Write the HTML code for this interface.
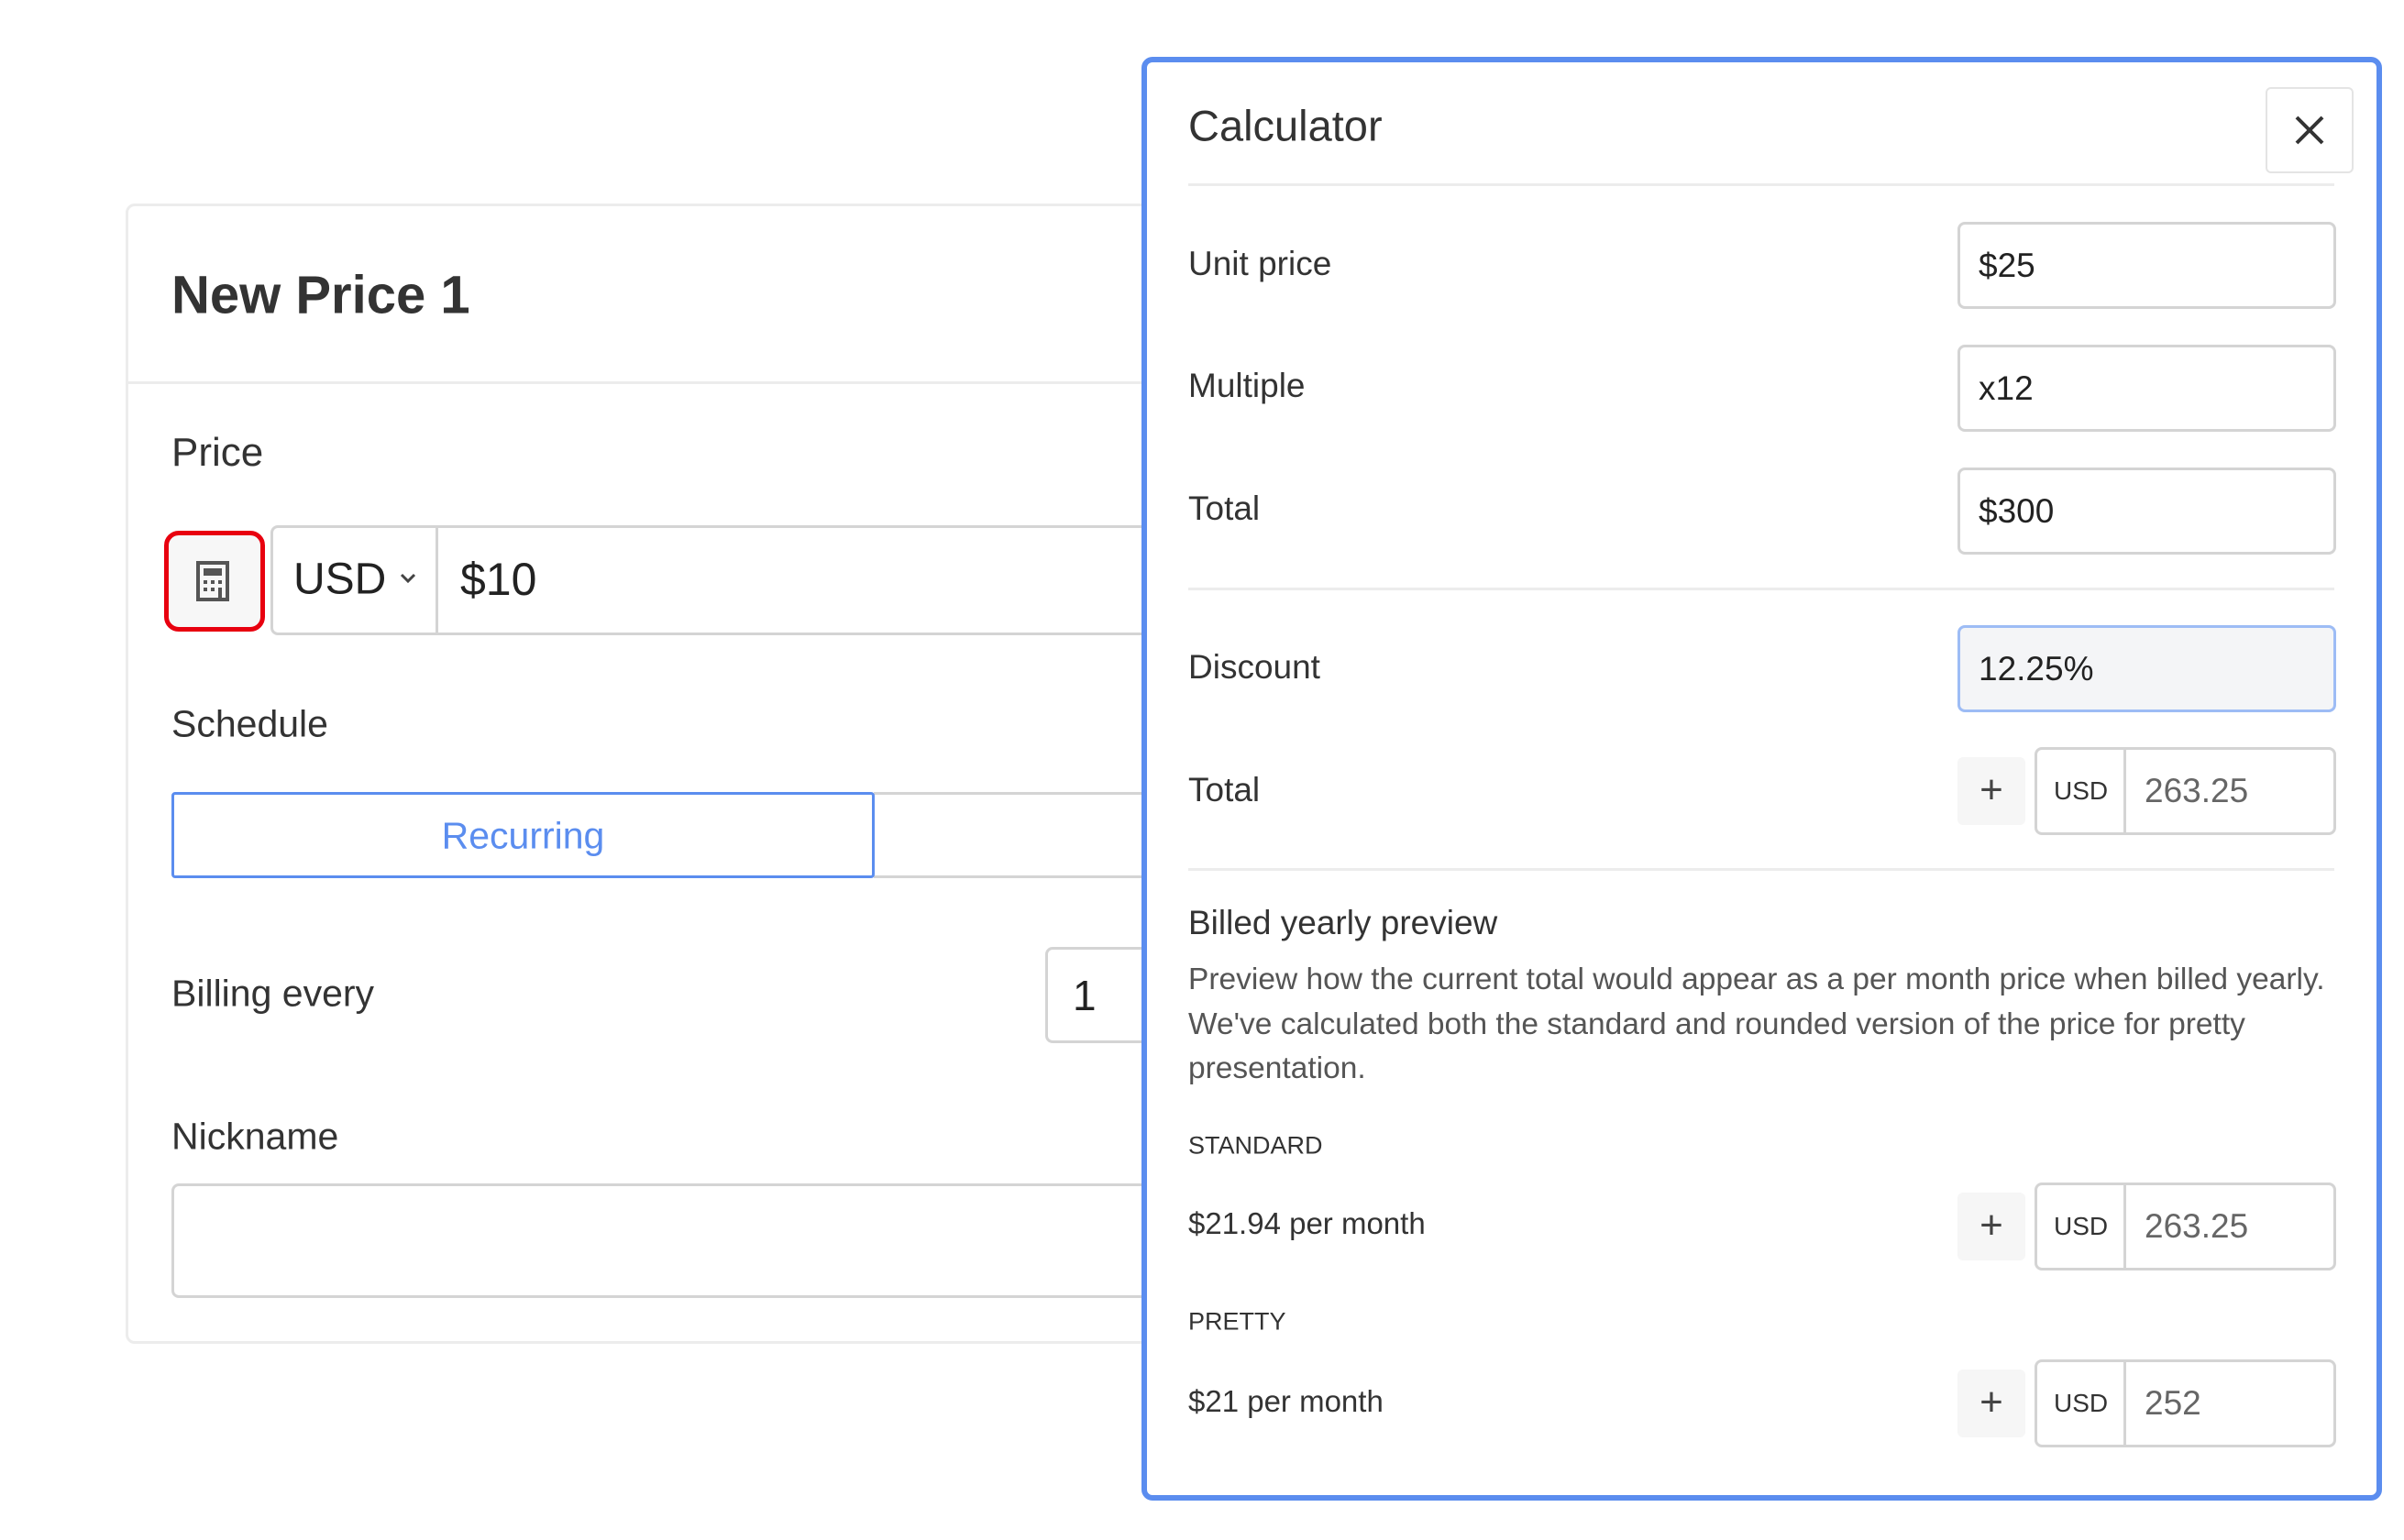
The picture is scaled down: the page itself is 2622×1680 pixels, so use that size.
<!DOCTYPE html>
<html><head><meta charset="utf-8"><style>
*{box-sizing:border-box;margin:0;padding:0}
body{width:2622px;height:1680px;background:#fff;position:relative;overflow:hidden;font-family:"Liberation Sans",sans-serif;color:#333}
.a{position:absolute}
.t{position:absolute;white-space:nowrap;transform:translateY(-50%)}
.inp{position:absolute;border:3px solid #d4d4d4;border-radius:8px;background:#fff}
.lbl{font-size:37px;color:#333}
.iv{font-size:37px;color:#222;left:20px;top:50%}
.plus{position:absolute;background:#f6f6f6;border-radius:6px;font-size:44px;color:#444;text-align:center}
</style></head><body>

<!-- left card -->
<div class="a" style="left:137px;top:222px;width:1200px;height:1244px;border:3px solid #ececec;border-radius:10px"></div>
<div class="a" style="left:137px;top:416px;width:1200px;height:3px;background:#ececec"></div>
<div class="t" style="left:187px;top:322px;font-size:58px;font-weight:bold;color:#333">New Price 1</div>
<div class="t" style="left:187px;top:494px;font-size:44px">Price</div>
<div class="a" style="left:179px;top:579px;width:110px;height:110px;border:5px solid #e8000f;border-radius:16px;background:#f7f7f7"></div>
<svg class="a" style="left:214px;top:612px" width="40" height="46" viewBox="0 0 40 46"><rect x="2" y="2" width="32" height="40" fill="none" stroke="#555" stroke-width="4"/><rect x="8" y="8" width="20" height="8" fill="#555"/><g fill="#555"><rect x="8" y="21" width="4" height="4"/><rect x="16" y="21" width="4" height="4"/><rect x="24" y="21" width="4" height="4"/><rect x="8" y="29" width="4" height="4"/><rect x="16" y="29" width="4" height="4"/><rect x="24" y="29" width="4" height="13"/></g></svg>
<div class="inp" style="left:295px;top:573px;width:1100px;height:120px"></div>
<div class="a" style="left:475px;top:575px;width:3px;height:116px;background:#d4d4d4"></div>
<div class="t" style="left:320px;top:632px;font-size:48px;color:#222">USD</div>
<svg class="a" style="left:435px;top:624px" width="20" height="14"><path d="M3 3 L10 10 L17 3" fill="none" stroke="#444" stroke-width="3"/></svg>
<div class="t" style="left:502px;top:632px;font-size:50px;color:#222">$10</div>
<div class="t" style="left:187px;top:790px;font-size:41px">Schedule</div>
<div class="a" style="left:953px;top:864px;width:400px;height:94px;border:3px solid #d4d4d4;border-left:none"></div>
<div class="a" style="left:187px;top:864px;width:767px;height:94px;border:3px solid #5b8def;border-radius:4px;background:#fff"></div>
<div class="t" style="left:187px;width:767px;text-align:center;top:912px;font-size:41px;color:#5b8def">Recurring</div>
<div class="t" style="left:187px;top:1084px;font-size:41px">Billing every</div>
<div class="inp" style="left:1140px;top:1033px;width:200px;height:105px"></div>
<div class="t" style="left:1170px;top:1086px;font-size:46px;color:#222">1</div>
<div class="t" style="left:187px;top:1240px;font-size:41px">Nickname</div>
<div class="inp" style="left:187px;top:1291px;width:1200px;height:125px"></div>

<!-- calculator panel -->
<div class="a" style="left:1245px;top:62px;width:1353px;height:1575px;border:6px solid #5b8def;border-radius:12px;background:#fff"></div>
<div class="t" style="left:1296px;top:137px;font-size:47px;color:#333">Calculator</div>
<div class="a" style="left:2471px;top:95px;width:96px;height:94px;border:2px solid #e4e4e4;border-radius:6px"></div>
<svg class="a" style="left:2502px;top:125px" width="34" height="34"><path d="M3 3 L31 31 M31 3 L3 31" stroke="#333" stroke-width="4"/></svg>
<div class="a" style="left:1296px;top:200px;width:1250px;height:3px;background:#ececec"></div>

<div class="t lbl" style="left:1296px;top:288px">Unit price</div>
<div class="inp" style="left:2135px;top:242px;width:413px;height:95px"><div class="t iv">$25</div></div>
<div class="t lbl" style="left:1296px;top:421px">Multiple</div>
<div class="inp" style="left:2135px;top:376px;width:413px;height:95px"><div class="t iv">x12</div></div>
<div class="t lbl" style="left:1296px;top:555px">Total</div>
<div class="inp" style="left:2135px;top:510px;width:413px;height:95px"><div class="t iv">$300</div></div>
<div class="a" style="left:1296px;top:641px;width:1250px;height:3px;background:#ececec"></div>

<div class="t lbl" style="left:1296px;top:728px">Discount</div>
<div class="inp" style="left:2135px;top:682px;width:413px;height:95px;border-color:#9dbcf5;background:#f4f5f7"><div class="t iv">12.25%</div></div>

<div class="t lbl" style="left:1296px;top:862px">Total</div>
<div class="plus" style="left:2135px;top:826px;width:74px;height:74px;line-height:72px">+</div>
<div class="inp" style="left:2219px;top:815px;width:329px;height:96px"><div class="a" style="left:94px;top:0;width:3px;height:90px;background:#d4d4d4"></div><div class="t" style="left:18px;top:50%;font-size:28px;color:#333">USD</div><div class="t" style="left:117px;top:50%;font-size:37px;color:#666">263.25</div></div>
<div class="a" style="left:1296px;top:947px;width:1250px;height:3px;background:#ececec"></div>

<div class="t" style="left:1296px;top:1007px;font-size:37px;color:#333">Billed yearly preview</div>
<div class="a" style="left:1296px;top:1045px;white-space:nowrap;font-size:33.5px;line-height:48.5px;color:#555">Preview how the current total would appear as a per month price when billed yearly.<br>We've calculated both the standard and rounded version of the price for pretty<br>presentation.</div>
<div class="t" style="left:1296px;top:1250px;font-size:27px;color:#333">STANDARD</div>
<div class="t" style="left:1296px;top:1335px;font-size:33px;color:#333">$21.94 per month</div>
<div class="plus" style="left:2135px;top:1301px;width:74px;height:74px;line-height:72px">+</div>
<div class="inp" style="left:2219px;top:1290px;width:329px;height:96px"><div class="a" style="left:94px;top:0;width:3px;height:90px;background:#d4d4d4"></div><div class="t" style="left:18px;top:50%;font-size:28px;color:#333">USD</div><div class="t" style="left:117px;top:50%;font-size:37px;color:#666">263.25</div></div>
<div class="t" style="left:1296px;top:1442px;font-size:27px;color:#333">PRETTY</div>
<div class="t" style="left:1296px;top:1529px;font-size:33px;color:#333">$21 per month</div>
<div class="plus" style="left:2135px;top:1494px;width:74px;height:74px;line-height:72px">+</div>
<div class="inp" style="left:2219px;top:1483px;width:329px;height:96px"><div class="a" style="left:94px;top:0;width:3px;height:90px;background:#d4d4d4"></div><div class="t" style="left:18px;top:50%;font-size:28px;color:#333">USD</div><div class="t" style="left:117px;top:50%;font-size:37px;color:#666">252</div></div>
</body></html>
